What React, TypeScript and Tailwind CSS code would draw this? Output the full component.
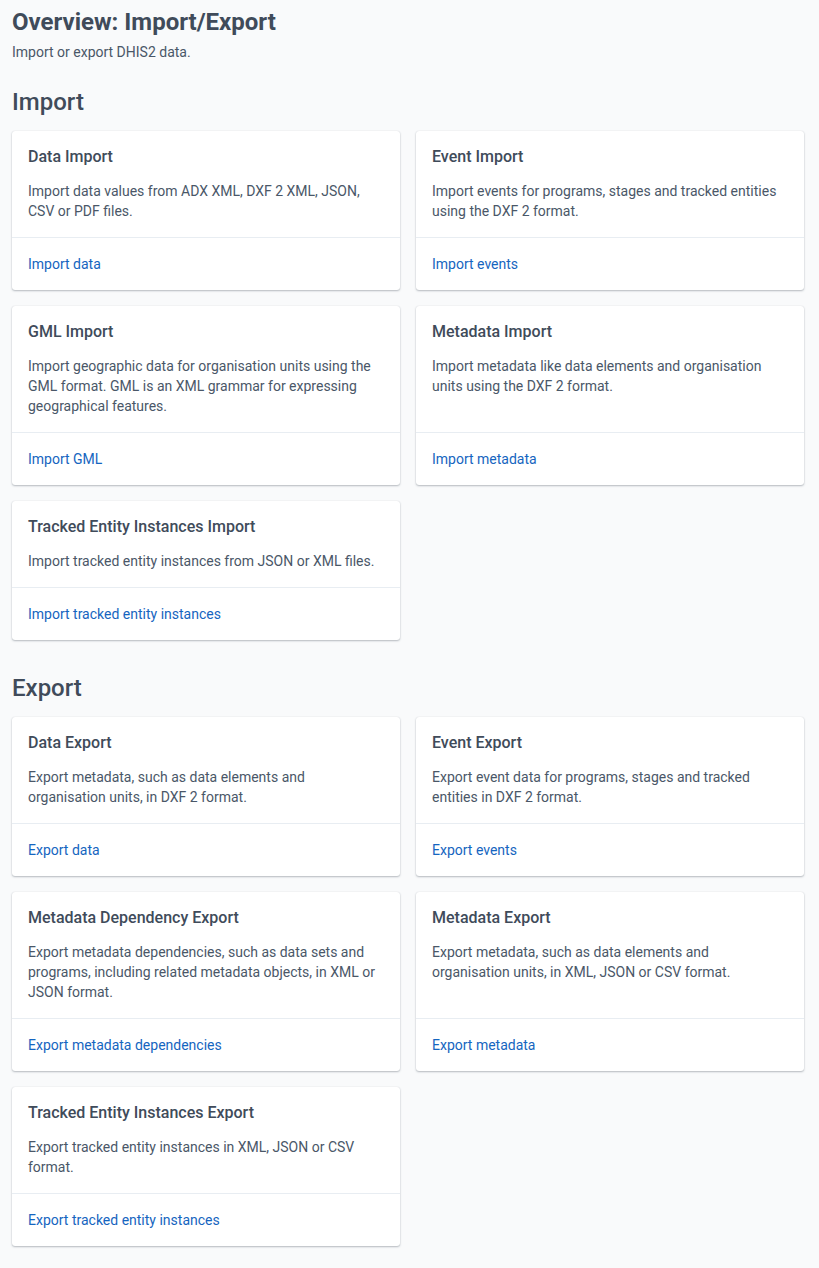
import React from "react";

type Item = { title: string; desc: string; link: string };

const importItems: Item[] = [
  { title: "Data Import", desc: "Import data values from ADX XML, DXF 2 XML, JSON, CSV or PDF files.", link: "Import data" },
  { title: "Event Import", desc: "Import events for programs, stages and tracked entities using the DXF 2 format.", link: "Import events" },
  { title: "GML Import", desc: "Import geographic data for organisation units using the GML format. GML is an XML grammar for expressing geographical features.", link: "Import GML" },
  { title: "Metadata Import", desc: "Import metadata like data elements and organisation units using the DXF 2 format.", link: "Import metadata" },
  { title: "Tracked Entity Instances Import", desc: "Import tracked entity instances from JSON or XML files.", link: "Import tracked entity instances" },
];

const exportItems: Item[] = [
  { title: "Data Export", desc: "Export metadata, such as data elements and organisation units, in DXF 2 format.", link: "Export data" },
  { title: "Event Export", desc: "Export event data for programs, stages and tracked entities in DXF 2 format.", link: "Export events" },
  { title: "Metadata Dependency Export", desc: "Export metadata dependencies, such as data sets and programs, including related metadata objects, in XML or JSON format.", link: "Export metadata dependencies" },
  { title: "Metadata Export", desc: "Export metadata, such as data elements and organisation units, in XML, JSON or CSV format.", link: "Export metadata" },
  { title: "Tracked Entity Instances Export", desc: "Export tracked entity instances in XML, JSON or CSV format.", link: "Export tracked entity instances" },
];

function Card({ item }: { item: Item }) {
  return (
    <div className="flex flex-col bg-white rounded-[3px] shadow-[0_0_1px_rgba(64,75,90,0.2),0_1px_2px_rgba(64,75,90,0.35)]">
      <div className="flex-1 px-4 pt-4 pb-4">
        <div className="text-[16px] leading-5 font-medium text-[#404b5a]">{item.title}</div>
        <div className="mt-[14px] text-[14px] leading-5 text-[#4a5768] pr-2">{item.desc}</div>
      </div>
      <div className="border-t border-[#e8edf2] px-4 pt-4 pb-4">
        <a href="#" className="text-[14px] leading-5 text-[#1565c0] block">{item.link}</a>
      </div>
    </div>
  );
}

export default function App() {
  return (
    <div className="min-h-[1268px] bg-[#f9fafb] pl-3 pt-[6px] pb-5" style={{ fontFamily: "Roboto, 'Noto Sans', sans-serif" }}>
      <h1 className="text-[24px] leading-8 font-bold text-[#404b5a]">Overview: Import/Export</h1>
      <p className="mt-[4px] text-[14px] leading-5 text-[#4a5768]">Import or export DHIS2 data.</p>

      <h2 className="mt-[24px] text-[24px] leading-8 font-medium text-[#404b5a]">Import</h2>
      <div className="mt-[13px] grid grid-cols-[388px_388px] gap-4">
        {importItems.map((it) => (
          <Card key={it.title} item={it} />
        ))}
      </div>

      <h2 className="mt-[32px] text-[24px] leading-8 font-medium text-[#404b5a]">Export</h2>
      <div className="mt-[13px] grid grid-cols-[388px_388px] gap-4">
        {exportItems.map((it) => (
          <Card key={it.title} item={it} />
        ))}
      </div>
    </div>
  );
}
